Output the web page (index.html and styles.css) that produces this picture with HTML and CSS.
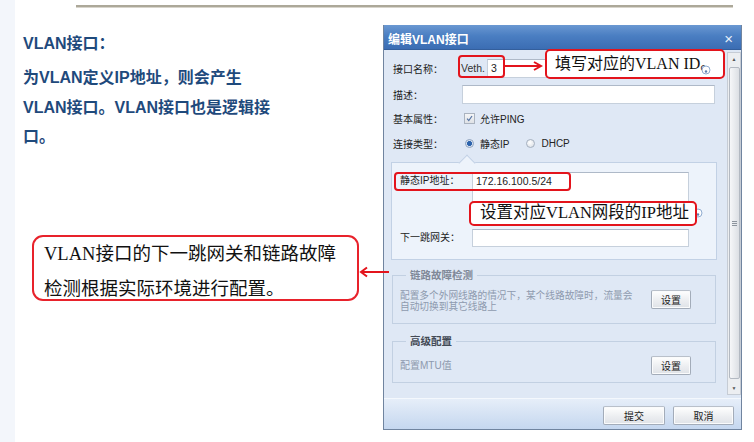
FILE: index.html
```html
<!DOCTYPE html>
<html lang="zh-CN">
<head>
<meta charset="utf-8">
<title>编辑VLAN接口</title>
<link rel="stylesheet" href="styles.css">
</head>
<body>
<div class="page">
  <div class="rule"></div>
  <div class="main">
    <section class="intro">
      <h2 class="intro-title">VLAN接口：</h2>
      <p class="intro-text">为VLAN定义IP地址，则会产生<br>VLAN接口。VLAN接口也是逻辑接<br>口。</p>
      <div class="note">VLAN接口的下一跳网关和链路故障<br>检测根据实际环境进行配置。</div>
    </section>

    <div class="dialog">
      <div class="dlg-title">
        <span>编辑VLAN接口</span>
        <span class="dlg-close">×</span>
      </div>
      <div class="dlg-body">
        <div class="dlg-content">
          <div class="row row-name">
            <span class="label">接口名称：</span>
            <span class="prefix">Veth.</span>
            <span class="input input-name">3</span>
            <svg class="help help-name" viewBox="0 0 10 10"><circle cx="5" cy="5" r="4" fill="#fff" stroke="#8fabd0" stroke-width="1"/><circle cx="5" cy="6.5" r="1.2" fill="#5d7fb0"/></svg>
          </div>
          <div class="row row-desc">
            <span class="label">描述：</span>
            <span class="input input-desc"></span>
          </div>
          <div class="row row-attr">
            <span class="label">基本属性：</span>
            <span class="checkbox"><svg viewBox="0 0 10 10"><path d="M2.3 5.2 L4.2 7.4 L7.8 2.2" fill="none" stroke="#5473a3" stroke-width="1.3"/></svg></span>
            <span class="opt">允许PING</span>
          </div>
          <div class="row row-type">
            <span class="label">连接类型：</span>
            <span class="radio checked"></span>
            <span class="opt">静态IP</span>
            <span class="radio"></span>
            <span class="opt">DHCP</span>
          </div>

          <div class="panel">
            <div class="prow prow-ip">
              <span class="plabel">静态IP地址：</span>
              <span class="input input-ip">172.16.100.5/24</span>
              <svg class="help help-ip" viewBox="0 0 10 10"><circle cx="5" cy="5" r="4" fill="#fff" stroke="#8fabd0" stroke-width="1"/><circle cx="5" cy="6.5" r="1.2" fill="#5d7fb0"/></svg>
            </div>
            <div class="prow prow-gw">
              <span class="plabel">下一跳网关：</span>
              <span class="input input-gw"></span>
            </div>
          </div>

          <fieldset class="group group-link">
            <legend>链路故障检测</legend>
            <div class="group-row">
              <p class="group-desc">配置多个外网线路的情况下，某个线路故障时，流量会<br>自动切换到其它线路上</p>
              <button class="btn btn-set">设置</button>
            </div>
          </fieldset>

          <fieldset class="group group-adv">
            <legend>高级配置</legend>
            <div class="group-row">
              <p class="group-desc">配置MTU值</p>
              <button class="btn btn-set">设置</button>
            </div>
          </fieldset>
        </div>
        <div class="scrollbar">
          <span class="sb-arrow">▲</span>
          <span class="sb-thumb"><span class="sb-grip"></span></span>
          <span class="sb-arrow">▼</span>
        </div>
      </div>
      <div class="dlg-footer">
        <button class="btn btn-submit">提交</button>
        <button class="btn btn-cancel">取消</button>
      </div>

      <div class="mark mark-name"></div>
      <svg class="pointer pointer-name" viewBox="0 0 38 10"><path d="M0 5 H35" stroke="#e3141c" stroke-width="2"/><path d="M29 1 L36 5 L29 9" fill="none" stroke="#e3141c" stroke-width="2"/></svg>
      <div class="callout callout-name">填写对应的VLAN ID。</div>
      <div class="mark mark-ip"></div>
      <div class="callout callout-ip">设置对应VLAN网段的IP地址</div>
    </div>

    <svg class="pointer pointer-note" viewBox="0 0 30 12"><path d="M2 6 H30" stroke="#e3141c" stroke-width="2"/><path d="M8 1.5 L2 6 L8 10.5" fill="none" stroke="#e3141c" stroke-width="2"/></svg>
  </div>
</div>
</body>
</html>
```

FILE: styles.css
```css
* { box-sizing: border-box; }

html, body {
  margin: 0;
  padding: 0;
  background: #fff;
}

.page {
  width: 754px;
  height: 442px;
  overflow: hidden;
  background: linear-gradient(90deg, #f3f6fb 0 15px, #ffffff 15px);
  font-family: "Liberation Sans", "Noto Sans CJK SC", sans-serif;
}

.rule {
  margin: 5px 0 0 76px;
  width: 657px;
  height: 3px;
  background: #aca899;
  border-bottom: 1px solid #d8d5cc;
}

.main {
  position: relative;
  display: flex;
  margin-top: 17px;
}

/* ---------- intro ---------- */
.intro {
  width: 383px;
  padding: 4px 0 0 23px;
  color: #1f4a7c;
}

.intro-title {
  margin: 0;
  font-size: 16px;
  line-height: 30px;
  font-weight: bold;
}

.intro-text {
  margin: 4px 0 0;
  font-size: 16px;
  line-height: 29.5px;
  font-weight: bold;
}

.note {
  margin: 83px 0 0 9px;
  width: 327px;
  height: 66px;
  border: 2px solid #e8222b;
  border-radius: 11px;
  padding: 0 0 0 10px;
  font-family: "Liberation Serif", "Noto Sans CJK SC", serif;
  font-size: 18.5px;
  line-height: 35px;
  color: #111;
  white-space: nowrap;
}

.pointer-note {
  position: absolute;
  left: 359px;
  top: 241px;
  width: 30px;
  height: 12px;
}

/* ---------- dialog ---------- */
.dialog {
  position: relative;
  width: 359px;
  height: 405px;
  border: 1px solid #70849f;
  border-top: 0;
  background: #dfe8f5;
  font-family: "Liberation Sans", "Noto Sans CJK SC", sans-serif;
  font-size: 10px;
  color: #222;
}

.dlg-title {
  display: flex;
  justify-content: space-between;
  align-items: center;
  height: 25px;
  padding: 2px 8px 0 4px;
  background: linear-gradient(#6a98d2, #4a7ec2 45%, #3b6db3);
  border-bottom: 1px solid #345f9c;
  color: #fff;
  font-size: 12px;
  font-weight: bold;
}

.dlg-close {
  font-size: 15px;
  font-weight: normal;
  color: #e8eef8;
}

.dlg-body {
  display: flex;
  height: 348px;
  background: #dfe8f5;
}

.dlg-content {
  flex: 1;
  padding: 8px 10px 0 7px;
}

.row {
  display: flex;
  align-items: center;
  padding-left: 2px;
}

.label {
  width: 69px;
  flex: none;
}

.row-name { height: 20px; }
.row-desc { height: 19px; margin-top: 7px; }
.row-attr { height: 20px; margin-top: 4px; }
.row-type { height: 20px; margin-top: 5px; }

.prefix {
  width: 26px;
  font-size: 10.5px;
  color: #333;
  margin-left: -1px;
}

.input {
  display: block;
  background: #fff;
  border: 1px solid #c6d0dc;
  border-top-color: #aeb9c8;
}

.input-name {
  width: 213px;
  height: 19px;
  padding-left: 3px;
  line-height: 17px;
  font-size: 10.5px;
}

.input-desc {
  width: 253px;
  height: 19px;
}

.help {
  width: 10px;
  height: 10px;
  margin-left: 1px;
  margin-top: 4px;
}

/* the help icon of the name row shows above the annotation callout */
.help-name {
  position: relative;
  z-index: 3;
}

.checkbox {
  width: 11px;
  height: 11px;
  margin-left: 2px;
  border: 1px solid #aab3bf;
  background: linear-gradient(#f4f5f7, #dfe2e6);
  display: flex;
}

.checkbox svg { width: 100%; height: 100%; }

.opt {
  margin-left: 5px;
  font-size: 10px;
}

.radio {
  width: 9px;
  height: 9px;
  border-radius: 50%;
  border: 1px solid #a5b0bf;
  background: radial-gradient(circle at 40% 35%, #ffffff, #d6dbe2);
  margin-left: 3px;
}

.radio + .opt { margin-left: 6px; }
.opt + .radio { margin-left: 17px; }

.radio.checked {
  background: radial-gradient(circle, #2d63ac 0 2.2px, #cfdcee 2.7px, #eef2f7 4px);
  border-color: #8ea2bd;
}

/* ---------- panel ---------- */
.panel {
  position: relative;
  margin-top: 9px;
  border: 1px solid #c2d1e5;
  background: #edf3fb;
  padding: 9px 10px 12px 8px;
}

.panel::before {
  content: "";
  position: absolute;
  left: 69px;
  top: -6px;
  width: 11px;
  height: 11px;
  background: #edf3fb;
  border-left: 1px solid #c2d1e5;
  border-top: 1px solid #c2d1e5;
  transform: rotate(45deg);
}

.prow {
  display: flex;
  align-items: flex-start;
}

.plabel {
  width: 72px;
  flex: none;
  line-height: 18px;
}

.input-ip {
  width: 217px;
  height: 42px;
  padding-left: 3px;
  line-height: 17px;
  font-size: 10.5px;
  color: #222;
}

.help-ip {
  align-self: flex-end;
  margin: 0 0 -4px 4px;
}

.prow-gw { margin-top: 15px; }

.input-gw {
  width: 217px;
  height: 18px;
}

/* ---------- groups ---------- */
.group {
  margin: 8px 1px 0;
  border: 1px solid #c2d0e2;
  padding: 8px 24px 11px 7px;
  min-width: 0;
}

.group legend {
  margin-left: 6px;
  padding: 0 4px;
  font-size: 10.5px;
  line-height: 14px;
  font-weight: bold;
  color: #434a55;
}

.group-link legend { color: #7f8898; }

.group-adv {
  margin-top: 10px;
  padding-bottom: 7px;
}

.group-row {
  display: flex;
  align-items: flex-start;
  justify-content: space-between;
}

.group-desc {
  margin: 0;
  font-size: 9.7px;
  line-height: 11px;
  color: #8e9aae;
  white-space: nowrap;
}

.group-adv .group-desc { line-height: 19px; font-size: 10px; }

.btn {
  font-family: "Liberation Sans", "Noto Sans CJK SC", sans-serif;
  font-size: 10px;
  color: #222;
  height: 19px;
  padding: 0;
  border: 1px solid #a3acb9;
  border-top-color: #b9c0ca;
  border-radius: 2px;
  background: linear-gradient(#ffffff, #eceef1 55%, #dfe2e7);
  box-shadow: inset 0 0 0 1px #fafbfc;
}

.btn-set { width: 40px; flex: none; }

/* ---------- scrollbar ---------- */
.scrollbar {
  width: 14px;
  margin: 2px 0 3px;
  display: flex;
  flex-direction: column;
  align-items: center;
  border: 1px solid #c6ccd5;
  background: #eceef1;
}

.sb-arrow {
  font-size: 5px;
  line-height: 12px;
  height: 12px;
  color: #555;
}

.sb-thumb {
  flex: 1;
  width: 11px;
  margin: 2px 0 3px;
  border: 1px solid #b3b9c2;
  border-radius: 2px;
  background: linear-gradient(90deg, #f6f7f9, #dcdfe4);
  display: flex;
  align-items: center;
  justify-content: center;
}

.sb-grip {
  width: 5px;
  height: 5px;
  border-top: 1px solid #8d949e;
  border-bottom: 1px solid #8d949e;
  background: linear-gradient(#8d949e, #8d949e) center / 5px 1px no-repeat;
}

/* ---------- footer ---------- */
.dlg-footer {
  display: flex;
  justify-content: flex-end;
  gap: 8px;
  height: 31px;
  padding: 7px 7px 0 0;
  border-top: 1px solid #f4f8fd;
  background: linear-gradient(#e6eef9, #c5d7ef);
}

.btn-submit { width: 62px; }
.btn-cancel { width: 61px; }

/* ---------- annotations ---------- */
.mark {
  position: absolute;
  border: 2px solid #e3141c;
  border-radius: 4px;
}

.mark-name { left: 74px; top: 30px; width: 47px; height: 23px; }
.mark-ip { left: 10px; top: 147px; width: 177px; height: 19px; }

.pointer-name {
  position: absolute;
  left: 121px;
  top: 36px;
  width: 38px;
  height: 10px;
}

.callout {
  position: absolute;
  z-index: 2;
  background: #fff;
  border: 2px solid #e3141c;
  border-radius: 5px;
  font-family: "Liberation Serif", "Noto Sans CJK SC", serif;
  color: #111;
  white-space: nowrap;
}

.callout-name {
  left: 161px;
  top: 24px;
  width: 180px;
  height: 30px;
  padding-left: 8px;
  font-size: 16px;
  line-height: 26px;
}

.callout-ip {
  left: 85px;
  top: 176px;
  width: 228px;
  height: 25px;
  padding-left: 9px;
  font-size: 16.5px;
  line-height: 20px;
}
```
